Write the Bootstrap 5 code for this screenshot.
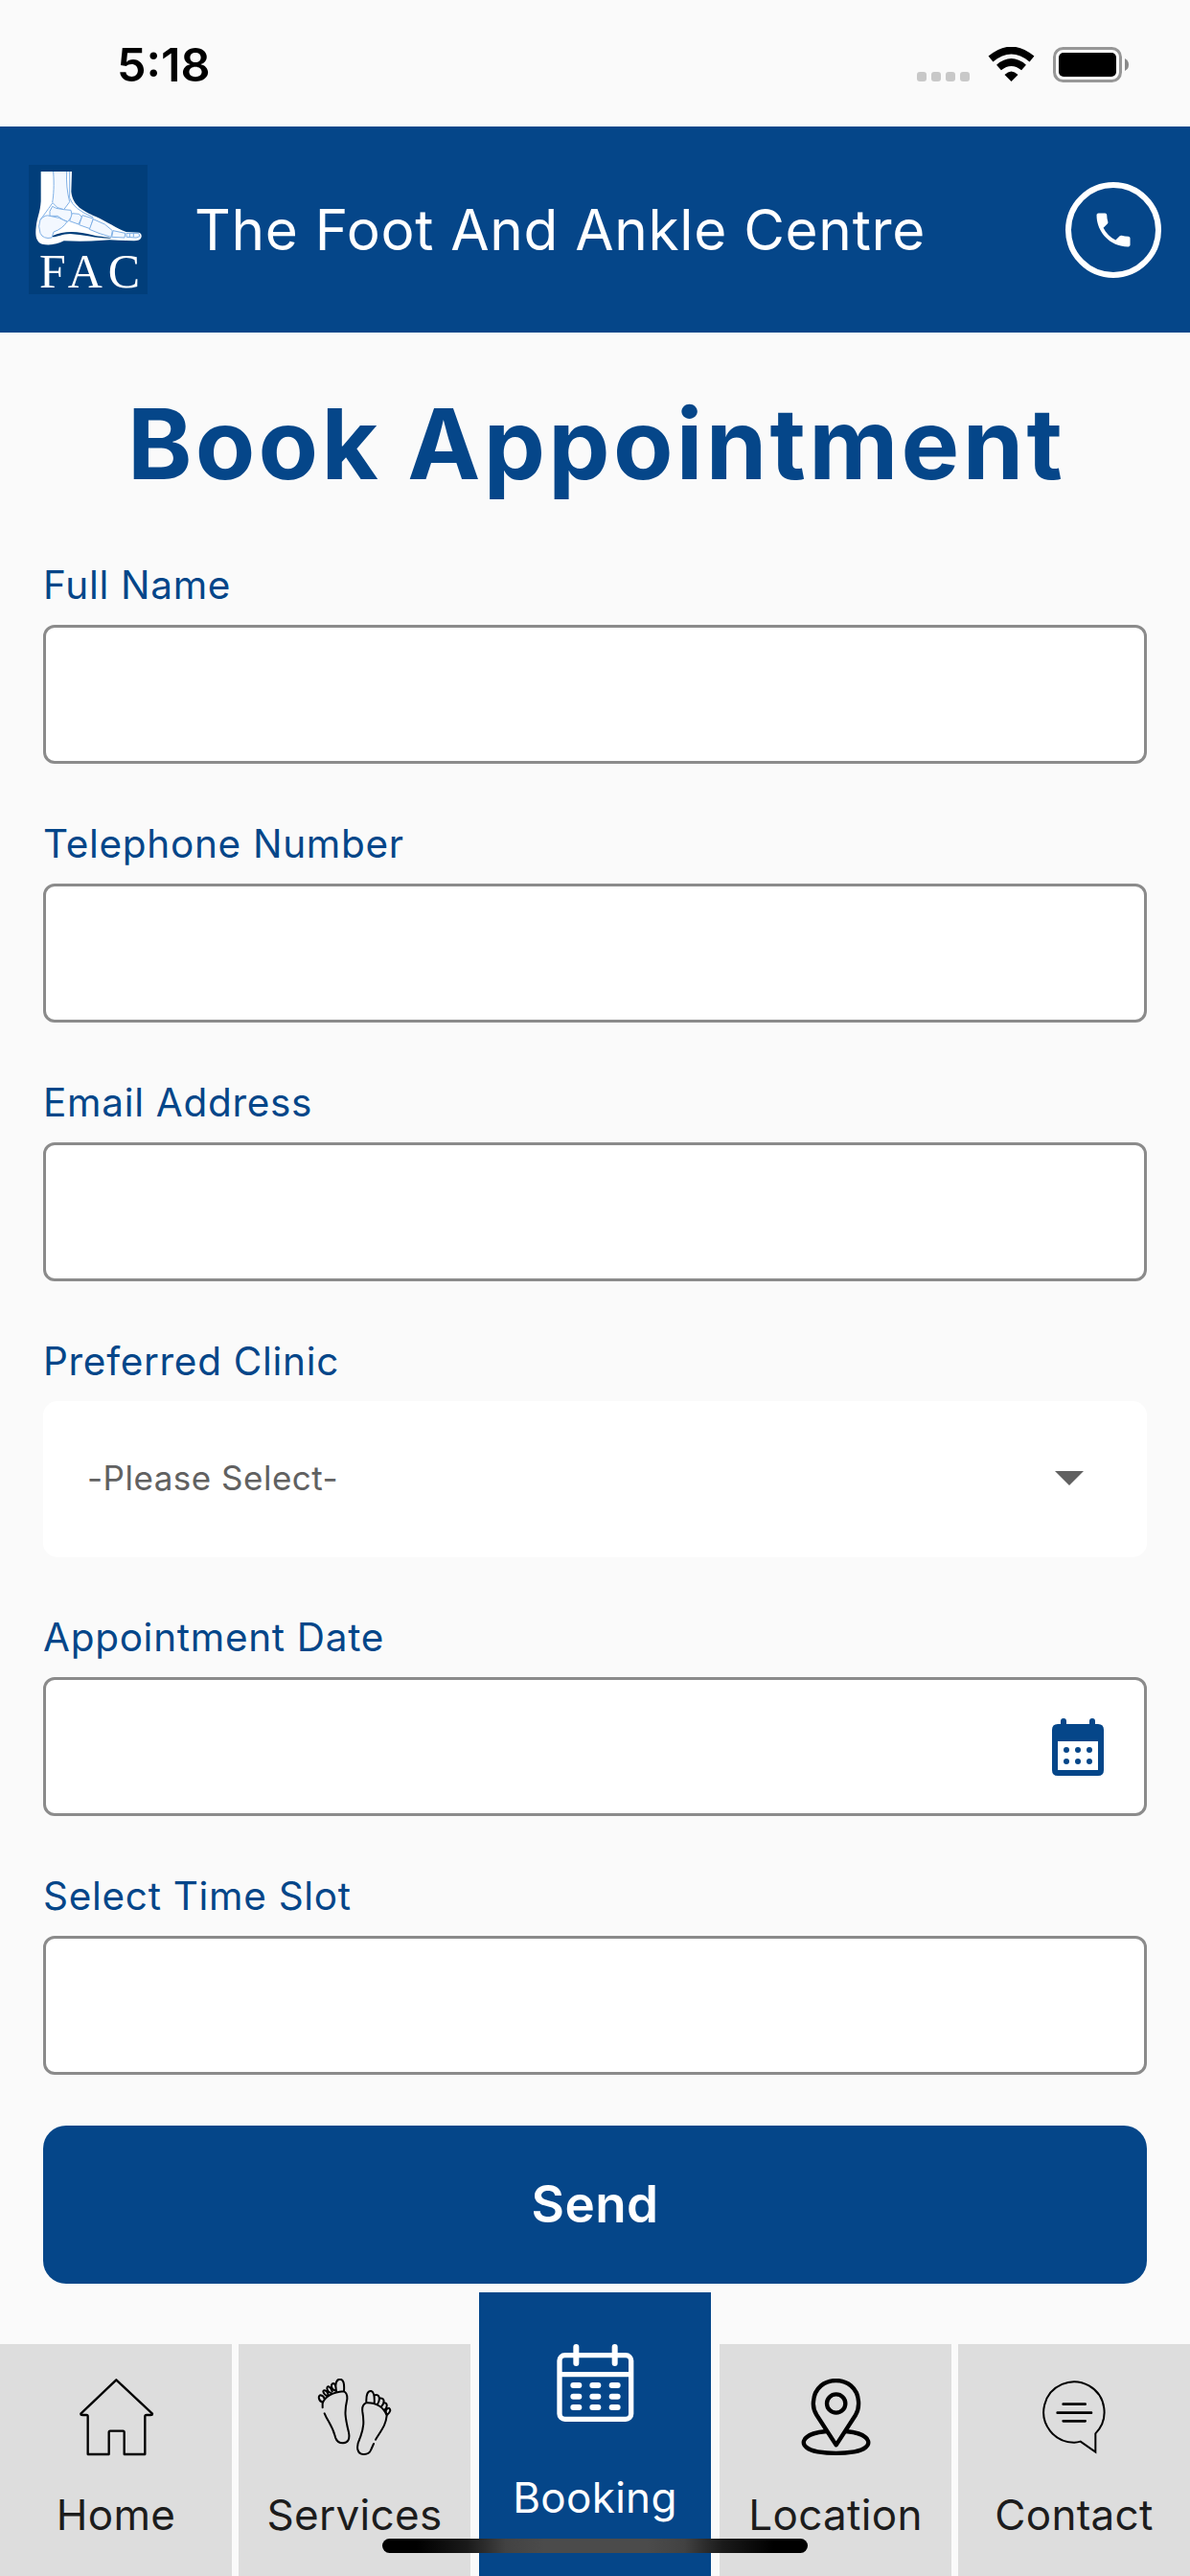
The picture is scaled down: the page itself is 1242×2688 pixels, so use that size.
<!DOCTYPE html>
<html lang="en">
<head>
<meta charset="utf-8">
<meta name="viewport" content="width=device-width, initial-scale=1">
<title>Book Appointment</title>
<link rel="stylesheet" href="https://cdn.jsdelivr.net/npm/bootstrap@5.3.0/dist/css/bootstrap.min.css">
<style>
:root{--brand:#054689}
body{background:#fafafa;font-family:Inter,"Liberation Sans",sans-serif}
svg{display:block;flex:none}
.screen{width:1242px;height:2688px}
.status{height:132px;padding:3px 63px 0 122px}
.clock{font-size:48.5px;font-weight:600;line-height:60px;color:#000}
.topbar{height:215px;background:var(--brand);padding:0 30px}
.brand-name{font-size:58.5px;line-height:72px;letter-spacing:.7px;color:#fff;margin-left:49px}
.book-form{padding:56px 45px 0}
.page-title{font-size:102px;line-height:120px;font-weight:700;letter-spacing:3.3px;color:var(--brand);margin-bottom:58px;padding-left:3px}
.field{margin-bottom:54px}
.field-label{font-size:40.5px;line-height:60px;letter-spacing:.7px;color:var(--brand);margin-bottom:11px}
.box{height:145px;border:3px solid #8b8b8b;border-radius:12px;background:#fff}
.date-box{padding-right:42px}
.picker{height:163px;border-radius:15px;background:#fff;border:0;padding:0 66px 3px 46px}
.picker-text{font-size:35px;line-height:50px;letter-spacing:.5px;color:#616161}
.send{height:165px;border-radius:24px;background:var(--brand);color:#fff;font-size:53px;font-weight:600;letter-spacing:.4px;margin-top:-1px}
.tabs{height:296px;margin-top:9px}
.tab{width:242px;height:242px;background:#ddd;padding-top:36px;color:#1c1c1c;text-decoration:none}
.tab svg{margin-bottom:34px}
.tab-text{font-size:44px;line-height:54px;letter-spacing:.3px}
.tab.on{height:296px;background:var(--brand);color:#fff;padding-top:54px;margin:0 2px}
.tab.on svg{margin-bottom:52px}
.home-bar{left:399px;top:2649px;width:444px;height:15px;border-radius:8px;background:linear-gradient(90deg,#000 8%,#1a1a1a 20%,#424242 29%,#4b4b4b 38%,#4b4b4b 62%,#424242 71%,#1a1a1a 80%,#000 92%)}
</style>
<script src="https://cdn.jsdelivr.net/npm/bootstrap@5.3.0/dist/js/bootstrap.bundle.min.js"></script>
</head>
<body>
<div class="screen d-flex flex-column position-relative overflow-hidden">
  <div class="status d-flex align-items-center justify-content-between">
    <span class="clock">5:18</span>
    <svg width="222" height="38" viewBox="957 49 222 38">
      <g fill="#c8c8c8"><rect x="957" y="75" width="10" height="10" rx="3"/><rect x="972" y="75" width="10" height="10" rx="3"/><rect x="987" y="75" width="10" height="10" rx="3"/><rect x="1002" y="75" width="10" height="10" rx="3"/></g>
      <g fill="none" stroke="#000" stroke-width="7.5"><path d="M1034 61.5Q1055.500 43.500 1077 61.500"/><path d="M1042.500 70.500Q1055.500 59.500 1068.500 70.500"/></g>
      <path d="M1048.500 78Q1055.500 71 1062.500 78L1055.500 85Z"/>
      <rect x="1100.500" y="50.500" width="69" height="34" rx="9" fill="none" stroke="#979797" stroke-width="3"/>
      <rect x="1105" y="55" width="60" height="25" rx="5"/>
      <path d="M1174 61Q1178 63 1178 67.500T1174 74Z" fill="#8a8a8a"/>
    </svg>
  </div>
  <header class="topbar d-flex align-items-center">
    <svg width="124" height="135" viewBox="30 36 372 405">
      <rect x="30" y="36" width="372" height="405" fill="#013e7a"/>
      <path fill="#fff" d="M68 57H165L163 120C168 165 200 180 240 198C275 214 305 235 335 246L376 248Q386 252 382 264Q378 274 360 274L310 272Q280 270 262 272C220 276 180 276 140 274C120 284 95 290 72 284C52 278 50 255 53 230C56 200 66 185 68 150Z"/>
      <path fill="#013e7a" d="M105 258C140 240 190 244 230 256C255 262 280 262 290 266C250 268 200 254 160 252C135 252 120 262 105 262Z"/>
      <g fill="#f3f8ff" stroke="#7fb0e6" stroke-width="3" stroke-linejoin="round"><path d="M107 57C110 100 108 130 104 154L120 170L140 176L158 152C150 120 147 90 149 57"/><path d="M104 166Q92 182 96 196L120 196Q138 210 152 214L166 196L162 178L140 176L116 172Z"/><path d="M66 208Q82 190 96 196L124 202L150 214Q136 236 108 246L102 264Q76 270 66 250Q58 228 66 208Z"/><path d="M166 188L188 190L196 200L186 222L158 212Z"/><path d="M198 194L232 204L222 236L188 224Z"/><path d="M232 206L268 222L292 242L288 262Q250 252 220 238Z"/><path d="M294 242L332 250L330 264L290 262Z"/><path d="M336 250L374 250L378 260L366 264L336 262Z"/></g>
      <path fill="none" stroke="#7fb0e6" stroke-width="3" d="M158 57V140Q170 176 232 200M104 156Q80 190 66 208M346 252V262M358 250V262"/>
      <g fill="#fff" font-family="Liberation Serif,serif" font-size="150"><text x="63" y="420">F</text><text x="152" y="420">A</text><text x="278" y="420">C</text></g>
    </svg>
    <span class="brand-name">The Foot And Ankle Centre</span>
    <svg class="ms-auto" width="100" height="100" viewBox="0 0 100 100"><circle cx="50" cy="50" r="47" fill="none" stroke="#fff" stroke-width="6"/><path transform="translate(26.700 26.700) scale(1.945)" fill="#fff" d="M6.620 10.790c1.440 2.830 3.760 5.140 6.590 6.590l2.200-2.200c.27-.27.67-.36 1.020-.24 1.120.37 2.330.57 3.570.57.55 0 1 .45 1 1V20c0 .55-.45 1-1 1-9.390 0-17-7.610-17-17 0-.55.45-1 1-1h3.500c.55 0 1 .45 1 1 0 1.250.2 2.450.57 3.570.11.35.03.74-.25 1.020l-2.200 2.200z"/></svg>
  </header>
  <form class="book-form">
    <h1 class="page-title text-center text-nowrap">Book Appointment</h1>
    <div class="field"><label class="field-label d-block" for="name">Full Name</label><input id="name" class="box form-control p-0"></div>
    <div class="field"><label class="field-label d-block" for="tel">Telephone Number</label><input id="tel" class="box form-control p-0"></div>
    <div class="field"><label class="field-label d-block" for="mail">Email Address</label><input id="mail" class="box form-control p-0"></div>
    <div class="field"><label class="field-label d-block" for="clinic">Preferred Clinic</label>
      <button id="clinic" type="button" class="picker w-100 d-flex align-items-center justify-content-between"><span class="picker-text">-Please Select-</span><svg width="30" height="15" viewBox="1 0 30 15"><path d="M1 0H31L16 15Z" fill="#616161"/></svg></button></div>
    <div class="field"><label class="field-label d-block" for="date">Appointment Date</label>
      <div class="box date-box d-flex align-items-center"><input id="date" class="form-control border-0 bg-transparent shadow-none">
      <svg width="54" height="60" viewBox="1098 1793 54 60"><path fill="#054689" fill-rule="evenodd" d="M1107 1799V1796Q1107 1793 1110 1793T1113 1796V1799H1137V1796Q1137 1793 1140 1793T1143 1796V1799H1146Q1152 1799 1152 1805V1847Q1152 1853 1146 1853H1104Q1098 1853 1098 1847V1805Q1098 1799 1104 1799ZM1104 1817V1847H1146V1817Z"/><g fill="#054689"><circle cx="1113" cy="1826" r="3"/><circle cx="1125" cy="1826" r="3"/><circle cx="1137" cy="1826" r="3"/><circle cx="1113" cy="1838" r="3"/><circle cx="1125" cy="1838" r="3"/><circle cx="1137" cy="1838" r="3"/></g></svg></div></div>
    <div class="field"><label class="field-label d-block" for="slot">Select Time Slot</label><input id="slot" class="box form-control p-0"></div>
    <button type="button" class="btn send w-100 border-0">Send</button>
  </form>
  <nav class="tabs d-flex align-items-end justify-content-between">
    <a class="tab d-flex flex-column align-items-center"><svg width="81" height="81" viewBox="242 156 243 243"><path fill="none" stroke="#000" stroke-width="7" stroke-linejoin="round" d="M363 160L252 266Q252 270 258 270H270Q274 270 274 274V393H340V324Q340 320 344 320H384Q388 320 388 324V393H453V274Q453 270 458 270H470Q476 270 476 266Z"/></svg><span class="tab-text">Home</span></a>
    <a class="tab d-flex flex-column align-items-center"><svg width="81" height="81" viewBox="988 156 243 243"><g fill="none" stroke="#000" stroke-width="6" stroke-linecap="round" stroke-linejoin="round"><path d="M1008 247V234C1014 212 1042 198 1074 196Q1086 200 1085 220C1076 260 1078 275 1090 325Q1096 356 1072 358Q1054 358 1048 340C1040 305 1024 290 1014 265M1051 194C1046 172 1052 158 1062 158Q1078 158 1075 194M1051 194C1034 192 1032 172 1042 171Q1048 172 1050 186M1036 202C1018 196 1020 178 1028 181Q1034 184 1038 196M1024 212C1006 202 1008 190 1016 193Q1024 196 1026 208M1008 230C994 226 994 208 1001 208Q1012 210 1014 220"/><path d="M1174 347C1196 312 1206 300 1209 272C1200 246 1176 230 1144 232Q1130 238 1133 260C1138 290 1138 310 1124 345C1112 370 1116 392 1136 393Q1154 394 1160 378L1168 360M1145 230C1144 204 1150 194 1160 195Q1172 198 1170 234M1172 208C1186 204 1190 220 1180 236M1186 218C1202 214 1204 230 1192 244M1199 232C1212 230 1212 246 1202 254M1210 270C1202 258 1208 248 1216 248Q1226 256 1210 270"/></g></svg><span class="tab-text">Services</span></a>
    <a class="tab on d-flex flex-column align-items-center"><svg width="81" height="81" viewBox="302 228 243 243"><g fill="none" stroke="#fff" stroke-width="16"><rect x="311" y="263" width="224" height="200" rx="17"/><path d="M311 323H535"/><path stroke-width="18" stroke-linecap="round" d="M363 237V288M484 237V288M354 357H372M414 357H432M475 357H493M354 392H372M414 392H432M475 392H493M354 426H372M414 426H432M475 426H493"/></g></svg><span class="tab-text">Booking</span></a>
    <a class="tab d-flex flex-column align-items-center"><svg width="81" height="81" viewBox="276 156 243 243"><g fill="none" stroke="#000" stroke-width="13" stroke-linejoin="round"><path d="M398 364L337 270C326 252 326 236 327 228C332 140 463 140 468 228C469 240 467 256 459 270Z"/><circle cx="398" cy="234" r="29"/><path d="M368 321C280 328 276 374 340 385Q398 394 455 385C520 374 514 328 428 321"/></g></svg><span class="tab-text">Location</span></a>
    <a class="tab d-flex flex-column align-items-center"><svg width="81" height="81" viewBox="1022 156 243 243"><path fill="none" stroke="#000" stroke-width="6" d="M1209 386V328A95 95 0 1 0 1143 356Q1152 356 1162 353Z"/><path stroke="#000" stroke-width="8" stroke-linecap="round" d="M1108 236H1177M1090 263H1196M1108 289H1177"/></svg><span class="tab-text">Contact</span></a>
  </nav>
  <div class="home-bar position-absolute"></div>
</div>
</body>
</html>
